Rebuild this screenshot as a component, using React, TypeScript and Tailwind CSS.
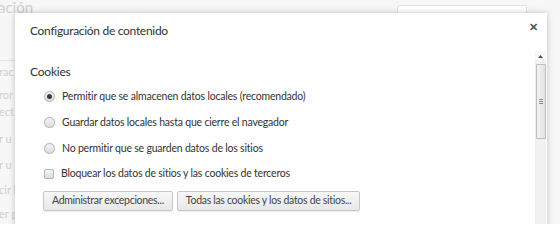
import React from "react";

const font = { fontFamily: 'Lato, "Noto Sans", sans-serif' };

const Radio = ({ checked }: { checked?: boolean }) => (
  <span className="flex h-[11px] w-[11px] shrink-0 items-center justify-center rounded-full border border-[#b5b5b5] bg-gradient-to-b from-[#f4f4f4] to-[#dedede] shadow-[0_0_1px_#ccc]">
    {checked && <span className="h-[5px] w-[5px] rounded-full bg-[#3a3a3a]" />}
  </span>
);

const Option = ({ label, checked }: { label: string; checked?: boolean }) => (
  <label className="flex items-center gap-[7px] text-[10.5px] tracking-[-0.2px] text-[#333]">
    <Radio checked={checked} />
    <span>{label}</span>
  </label>
);

const Button = ({ children }: { children: React.ReactNode }) => (
  <button className="h-[20px] rounded-[2px] border border-[#c6c6c6] bg-gradient-to-b from-[#f8f8f8] to-[#e8e8e8] px-[8px] text-[10.5px] tracking-[-0.3px] text-[#444] shadow-[0_1px_0_rgba(0,0,0,0.06)]">
    {children}
  </button>
);

export default function App() {
  const sideText = [
    { t: "rac", y: "top-[64px]" },
    { t: "ror", y: "top-[87px]" },
    { t: "ect", y: "top-[104px]" },
    { t: "r u", y: "top-[131px]" },
    { t: "r u", y: "top-[157px]" },
    { t: "cir l", y: "top-[182px]" },
    { t: "er p", y: "top-[206px]" },
  ];

  return (
    <div className="relative h-[224px] w-[560px] overflow-hidden bg-[#f7f7f7]" style={font}>
      {/* faded page behind the overlay */}
      <div className="absolute inset-0 text-[#cfcfcf]">
        <div className="absolute left-[-2px] top-0 text-[15px] leading-[15px]">ación</div>
        <div className="absolute left-[397px] top-[5px] h-[14px] w-[130px] rounded-[2px] border border-[#e2e2e2] bg-white" />
        <div className="absolute left-0 top-[60px] h-px w-[15px] bg-[#e3e3e3]" />
        {sideText.map((s, i) => (
          <div key={i} className={`absolute left-[-1px] text-[11px] ${s.y}`}>
            {s.t}
          </div>
        ))}
      </div>

      {/* dialog */}
      <div className="absolute left-[15px] top-[13px] flex h-[240px] w-[532px] flex-col bg-white shadow-[0_0_6px_rgba(0,0,0,0.22)]">
        <div className="flex items-start justify-between pl-[15px] pr-[9px] pt-[9px]">
          <h1 className="text-[12px] tracking-[-0.3px] text-[#333]">Configuración de contenido</h1>
          <span className="mt-[-1px] text-[11px] font-bold leading-none text-[#555]">✕</span>
        </div>

        <div className="flex flex-1">
          <div className="flex-1 pl-[15px] pt-[23px]">
            <h2 className="text-[12px] tracking-[-0.2px] text-[#333]">Cookies</h2>
            <div className="mt-[8px] flex flex-col gap-[10px] pl-[14px]">
              <Option checked label="Permitir que se almacenen datos locales (recomendado)" />
              <Option label="Guardar datos locales hasta que cierre el navegador" />
              <Option label="No permitir que se guarden datos de los sitios" />
              <label className="flex items-center gap-[7px] text-[10.5px] tracking-[-0.2px] text-[#333]">
                <span className="h-[10px] w-[10px] shrink-0 rounded-[2px] border border-[#b5b5b5] bg-gradient-to-b from-[#f4f4f4] to-[#dedede]" />
                <span>Bloquear los datos de sitios y las cookies de terceros</span>
              </label>
            </div>
            <div className="mt-[9px] flex gap-[4px] pl-[13px]">
              <Button>Administrar excepciones...</Button>
              <Button>Todas las cookies y los datos de sitios...</Button>
            </div>
          </div>

          {/* scrollbar */}
          <div className="mr-[1px] mt-[11px] flex w-[11px] flex-col bg-[#f1f1f1]">
            <div className="flex h-[10px] items-center justify-center bg-[#f7f7f7]">
              <svg width="5" height="3" viewBox="0 0 5 3">
                <path d="M0 3 L2.5 0 L5 3 Z" fill="#505050" />
              </svg>
            </div>
            <div className="mx-auto mt-[3px] flex h-[75px] w-[10px] items-center justify-center rounded-[1px] border border-[#bdbdbd] bg-gradient-to-r from-[#f3f3f3] to-[#e2e2e2]">
              <div className="flex flex-col gap-[1px]">
                <span className="h-px w-[4px] bg-[#8a8a8a]" />
                <span className="h-px w-[4px] bg-[#8a8a8a]" />
                <span className="h-px w-[4px] bg-[#8a8a8a]" />
              </div>
            </div>
          </div>
        </div>
      </div>
    </div>
  );
}
